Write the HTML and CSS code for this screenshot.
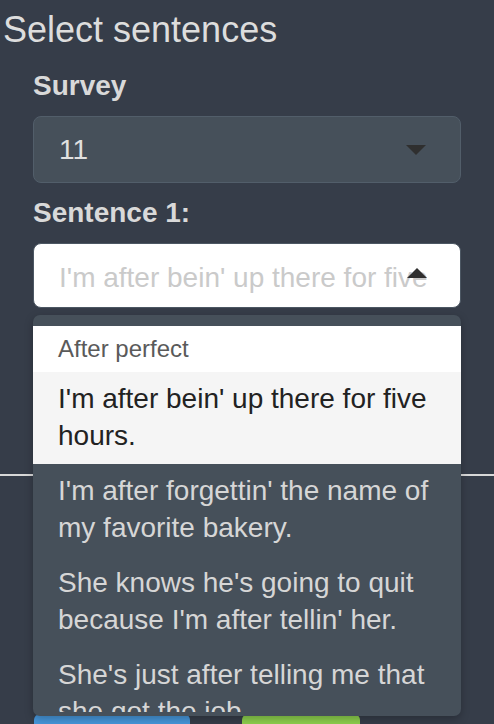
FILE: index.html
```html
<!DOCTYPE html>
<html>
<head>
<meta charset="utf-8">
<link rel="stylesheet" href="styles.css">
</head>
<body>
<div class="page">
  <h2 class="title">Select sentences</h2>
  <div class="form">
    <label class="label">Survey</label>
    <div class="select">
      <span class="value">11</span>
      <span class="caret-down"></span>
    </div>
    <label class="label">Sentence 1:</label>
    <div class="select-wrap">
      <div class="input open">
        <span class="placeholder">I'm after bein' up there for five hours.</span>
        <span class="caret-up"></span>
      </div>
      <div class="dropdown">
        <div class="dropdown-content">
          <div class="group-header">After perfect</div>
          <div class="option active">I'm after bein' up there for five hours.</div>
          <div class="option">I'm after forgettin' the name of my favorite bakery.</div>
          <div class="option">She knows he's going to quit because I'm after tellin' her.</div>
          <div class="option">She's just after telling me that she got the job.</div>
        </div>
      </div>
    </div>
  </div>
  <hr class="rule">
  <div class="buttons">
    <div class="btn btn-blue"></div>
    <div class="btn btn-green"></div>
  </div>
</div>
</body>
</html>
```
FILE: styles.css
```css
html, body {
  margin: 0;
  padding: 0;
  background: #363d49;
  font-family: "Liberation Sans", Arial, sans-serif;
  color: #dcdcdc;
  overflow: hidden;
}
.page {
  height: 724px;
  overflow: hidden;
}
.title {
  margin: 0;
  padding: 10px 0 0 3px;
  font-size: 36px;
  font-weight: normal;
  line-height: 40px;
  color: #dddddd;
}
.form {
  display: flex;
  flex-direction: column;
  padding: 16px 33px 0 33px;
}
.label {
  display: block;
  font-size: 28px;
  font-weight: bold;
  line-height: 40px;
  color: #d9d9d9;
  margin-bottom: 10px;
}
.select {
  box-sizing: border-box;
  height: 67px;
  margin-bottom: 10px;
  display: flex;
  align-items: center;
  justify-content: space-between;
  padding: 0 34px 0 25px;
  background: #46505a;
  border: 1px solid #525e6a;
  border-radius: 8px;
}
.value {
  font-size: 28px;
  line-height: 40px;
  color: #e0e0e0;
}
.caret-down {
  width: 0;
  height: 0;
  border-left: 10px solid transparent;
  border-right: 10px solid transparent;
  border-top: 10px solid #2f2f2f;
}
.select-wrap {
  position: relative;
}
.input {
  box-sizing: border-box;
  height: 65px;
  position: relative;
  overflow: hidden;
  padding: 14px 8px 0 25px;
  background: #ffffff;
  border: 1px solid #4c5763;
  border-radius: 8px;
}
.placeholder {
  display: block;
  font-size: 28px;
  line-height: 40px;
  color: #cacaca;
}
.caret-up {
  position: absolute;
  right: 33px;
  top: 24px;
  width: 0;
  height: 0;
  border-left: 10px solid transparent;
  border-right: 10px solid transparent;
  border-bottom: 10px solid #2f2f2f;
}
.dropdown {
  position: absolute;
  left: 0;
  right: 0;
  top: 72px;
  box-sizing: border-box;
  height: 401px;
  padding: 11px 0 4px 0;
  background: #46505a;
  border-radius: 7px;
  box-shadow: 0 3px 8px rgba(0, 0, 0, 0.25);
  z-index: 5;
}
.dropdown-content {
  height: 386px;
  overflow: hidden;
}
.group-header {
  background: #ffffff;
  color: #5a5a5a;
  font-size: 24px;
  line-height: 32px;
  padding: 7px 25px;
}
.option {
  font-size: 28px;
  line-height: 37px;
  padding: 8px 25px 10px 25px;
  color: #d6d6d6;
}
.option.active {
  background: #f5f5f5;
  color: #222222;
}
.rule {
  margin: 166px 0 0 0;
  border: 0;
  height: 2px;
  background: #d8d8d8;
}
.buttons {
  display: flex;
  gap: 52px;
  padding: 238px 0 0 34px;
}
.btn {
  height: 44px;
  border-radius: 6px;
}
.btn-blue {
  width: 156px;
  background: #4696da;
}
.btn-green {
  width: 118px;
  background: #8ccf4d;
}
```
